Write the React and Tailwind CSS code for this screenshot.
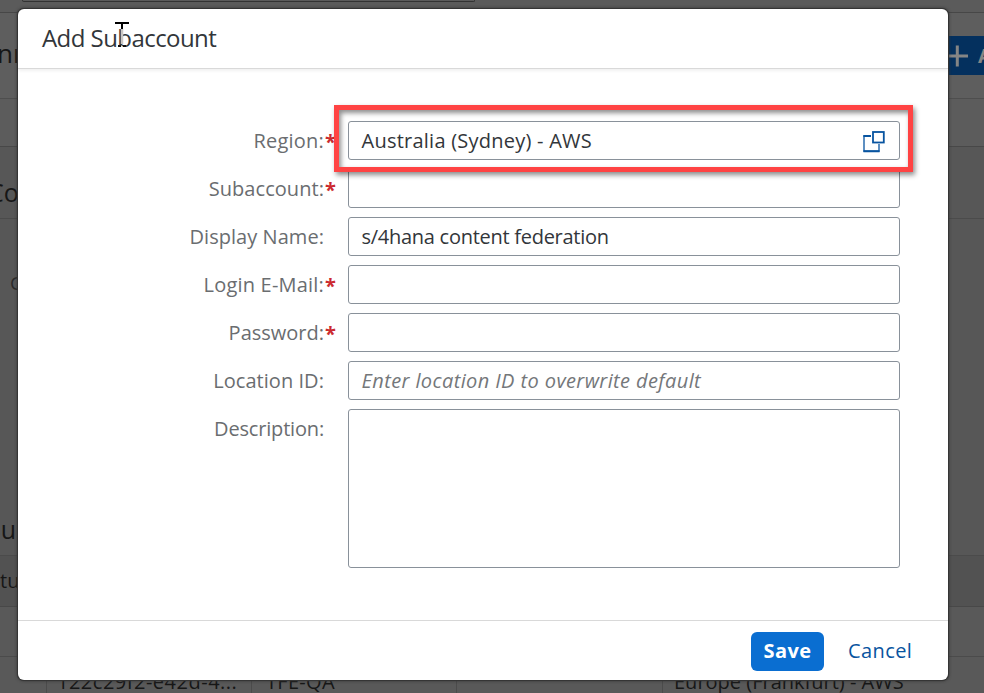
const labelFont = "font-['Open_Sans','Noto_Sans',sans-serif]";

function ValueHelpIcon() {
  return (
    <svg width="22" height="22" viewBox="0 0 22 22" fill="none" stroke="#0854a0" className="mt-[2px] shrink-0">
      <path d="M8 5H1V20.2H16V13" strokeWidth="1.3" />
      <path d="M0.4 5H8M0.4 20.2H16.6" strokeWidth="2" />
      <rect x="10" y="1" width="10.8" height="10.5" strokeWidth="1.8" />
    </svg>
  );
}

function Field({ label, required, children, tall, labelClass }) {
  return (
    <div className={`flex ${tall ? "h-[159px]" : "h-[39px]"}`}>
      <div className="flex h-[39px] w-[330px] items-center">
        <span className={`flex-1 whitespace-nowrap text-right text-[#6a6d70] ${labelClass}`}>{label}</span>
        <span className="w-6 pl-px pt-[2px] text-[20px] font-bold leading-none text-[#cc2a30]">{required ? "*" : ""}</span>
      </div>
      <div className="flex w-[552px] items-center justify-between rounded-[3px] border border-[#89919a] bg-white pl-[12.5px] pr-[14px] text-[#32363a]">
        {children}
      </div>
    </div>
  );
}

function Backdrop() {
  return (
    <div className="flex h-full flex-col bg-[#575757] text-[#161616]">
      <div className="h-[13px] border-b border-[#474747] bg-[#5b5b5b]">
        <div className="ml-[22px] h-[2px] w-[453px] rounded-b-sm border-x border-b border-[#333]" />
      </div>
      <div className="flex h-[86px] items-start justify-between border-b border-[#4e4e4e] bg-[#5e5e5e]">
        <span className="-ml-[3px] mt-[22px] text-[26px] leading-[36px]">nr</span>
        <div className="mt-[23px] flex h-[39px] w-[44px] items-center overflow-hidden bg-[#04305e] pl-[5px] text-[#858585]">
          <svg width="24" height="24" viewBox="0 0 24 24" stroke="currentColor" strokeWidth="3" className="shrink-0">
            <path d="M12.3 1.5v21M2 12h21" />
          </svg>
          <span className="ml-[9px] text-[20px] font-bold">A</span>
        </div>
      </div>
      <div className="h-12 border-b border-[#484848] bg-[#5c5c5c]" />
      <div className="flex h-[72px] items-center border-b border-[#4b4b4b]">
        <span className="-ml-[12px] mt-[20px] text-[25px] leading-none">Co</span>
      </div>
      <div className="flex h-[337px] flex-col justify-between border-b border-[#4b4b4b]">
        <span className="ml-[10px] mt-[51px] text-[19px] leading-[26px] text-[#2a2a2a]">C</span>
        <span className="-ml-[13px] mb-[10px] text-[25px] leading-[32px]">Su</span>
      </div>
      <div className="flex h-[51px] items-center border-b border-[#484848] bg-[#525252]">
        <span className="text-[20px]">tu</span>
      </div>
      <div className="h-[50px] border-b border-[#4b4b4b] bg-[#595959]" />
      <div className="flex h-[36px] bg-[#595959] text-[20px] leading-[50px]">
        <span className="w-[47px] border-r border-[#4b4b4b]" />
        <span className="w-[205px] border-r border-[#4b4b4b] pl-[10px] tracking-[0.5px]">122c29f2-e42d-4...</span>
        <span className="w-[205px] border-r border-[#4b4b4b] pl-[14px] tracking-[0.3px]">TFE-QA</span>
        <span className="w-[206px] border-r border-[#4b4b4b]" />
        <span className="whitespace-nowrap pl-[11px]">Europe (Frankfurt) - AWS</span>
      </div>
    </div>
  );
}

export default function App() {
  return (
    <div className={`relative h-[693px] w-[984px] overflow-hidden text-[20px] ${labelFont}`}>
      <Backdrop />
      <div className="absolute left-[18px] top-[9px] flex h-[671px] w-[930px] flex-col rounded-[6px] bg-white shadow-[0_0_0_1px_#353535,0_0_3px_1px_#333]">
        <header className="flex h-[60px] shrink-0 items-center border-b border-[#d9d9d9] pb-[2px] pl-6 text-[24px] tracking-[-0.56px] text-[#32363a] shadow-[0_2px_3px_rgba(0,0,0,0.06)]">
          Add Subaccount
        </header>
        <main className="flex flex-1 flex-col gap-[9px] pt-[52px]">
          <Field label="Region:" required labelClass="tracking-[0.2px]">
            <span className="tracking-[0.24px]">Australia (Sydney) - AWS</span>
            <ValueHelpIcon />
          </Field>
          <Field label="Subaccount:" required labelClass="tracking-[0.05px]" />
          <Field label="Display Name:" labelClass="tracking-[0.05px]">
            <span className="tracking-[-0.27px]">s/4hana content federation</span>
          </Field>
          <Field label="Login E-Mail:" required labelClass="tracking-[0.2px]" />
          <Field label="Password:" required labelClass="" />
          <Field label="Location ID:" labelClass="tracking-[0.05px]">
            <span className="italic tracking-[0.4px] text-[#74777a]">Enter location ID to overwrite default</span>
          </Field>
          <Field label="Description:" tall labelClass="tracking-[-0.18px]" />
        </main>
        <footer className="flex h-[60px] shrink-0 items-center border-t border-[#d9d9d9] pl-[733px] pt-px">
          <button className="h-[39px] w-[73px] rounded-[6px] bg-[#0a6ed1] font-bold tracking-[0.4px] text-white">Save</button>
          <button className="ml-6 tracking-[0.4px] text-[#0854a0]">Cancel</button>
        </footer>
      </div>
      <div className="absolute left-[334px] top-[105px] h-[67px] w-[579px] border-[5px] border-[#ff4343] shadow-[2px_3px_5px_rgba(0,0,0,0.45),inset_2px_3px_5px_rgba(0,0,0,0.45)]" />
      <svg className="absolute left-[114px] top-[21px]" width="16" height="27" viewBox="0 0 16 27" fill="none">
        <path d="M1 2h14M8 3v5" stroke="#000" strokeWidth="2" />
        <path d="M8 8v15" stroke="#c9c7c4" strokeWidth="2.5" />
        <path d="M4 25h3M9 25h3" stroke="#111" strokeWidth="2" />
      </svg>
    </div>
  );
}
